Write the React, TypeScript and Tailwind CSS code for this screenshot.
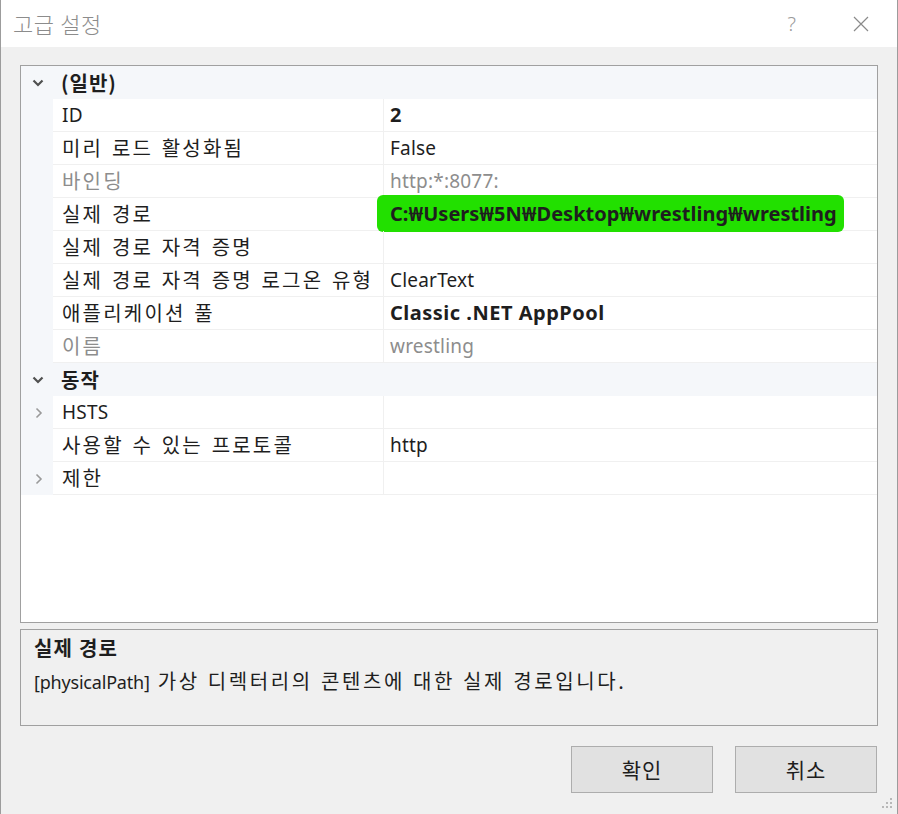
import React from 'react';

type Row =
  | { kind: 'cat'; label: string }
  | { kind: 'item'; name: string; value?: string; bold?: boolean; dim?: boolean; expand?: boolean; mark?: boolean };

const rows: Row[] = [
  { kind: 'cat', label: '(일반)' },
  { kind: 'item', name: 'ID', value: '2', bold: true },
  { kind: 'item', name: '미리 로드 활성화됨', value: 'False' },
  { kind: 'item', name: '바인딩', value: 'http:*:8077:', dim: true },
  { kind: 'item', name: '실제 경로', value: 'C:₩Users₩5N₩Desktop₩wrestling₩wrestling', bold: true, mark: true },
  { kind: 'item', name: '실제 경로 자격 증명', value: '' },
  { kind: 'item', name: '실제 경로 자격 증명 로그온 유형', value: 'ClearText' },
  { kind: 'item', name: '애플리케이션 풀', value: 'Classic .NET AppPool', bold: true },
  { kind: 'item', name: '이름', value: 'wrestling', dim: true },
  { kind: 'cat', label: '동작' },
  { kind: 'item', name: 'HSTS', value: '', expand: true },
  { kind: 'item', name: '사용할 수 있는 프로토콜', value: 'http' },
  { kind: 'item', name: '제한', value: '', expand: true },
];

const latin = { fontFamily: '"Noto Sans", "Noto Sans CJK KR", sans-serif' };
const hangul = { fontFamily: '"Noto Sans CJK KR", sans-serif' };
const hasHangul = (s: string) => /[\uac00-\ud7a3]/.test(s);

function Label({ text, className = '' }: { text: string; className?: string }) {
  if (hasHangul(text)) {
    return (
      <span
        className={`text-[20px] tracking-[2.2px] [word-spacing:2px] whitespace-nowrap ${className}`}
        style={hangul}
      >
        {text}
      </span>
    );
  }
  return (
    <span className={`text-[19px] tracking-[0.2px] whitespace-nowrap ${className}`} style={latin}>
      {text}
    </span>
  );
}

function ChevronDown() {
  return (
    <svg width="12" height="8" viewBox="0 0 12 8" className="text-[#505050]">
      <path d="M1.5 1.5 L6 6 L10.5 1.5" fill="none" stroke="currentColor" strokeWidth="2.2" />
    </svg>
  );
}

function ChevronRight() {
  return (
    <svg width="8" height="12" viewBox="0 0 8 12" className="text-[#9a9a9a]">
      <path d="M1.5 1.5 L6 6 L1.5 10.5" fill="none" stroke="currentColor" strokeWidth="1.6" />
    </svg>
  );
}

export default function App() {
  return (
    <div
      className="w-[898px] h-[814px] bg-[#f0f0f0] border-l border-r border-[#9c9c9c] flex flex-col relative overflow-hidden"
      style={latin}
    >
      {/* title bar */}
      <div className="h-[47px] bg-white flex items-center shrink-0">
        <span className="ml-[12px] text-[22px] tracking-[0.6px] text-[#8c8c8c] font-light" style={hangul}>
          고급 설정
        </span>
        <span className="ml-auto mr-[57px] text-[20px] text-[#9a9a9a] font-light">?</span>
        <svg width="16" height="16" viewBox="0 0 16 16" className="mr-[28px] text-[#8a8a8a]">
          <path d="M1 1 L15 15 M15 1 L1 15" stroke="currentColor" strokeWidth="1.2" />
        </svg>
      </div>

      {/* property grid */}
      <div className="mt-[18px] mx-[19px] h-[558px] border border-[#a0a0a0] bg-white shrink-0">
        {rows.map((r, i) =>
          r.kind === 'cat' ? (
            <div key={i} className="h-[33px] bg-[#f5f7fa] flex items-center">
              <div className="w-[32px] flex justify-center pl-[2px]">
                <ChevronDown />
              </div>
              <span
                className="ml-[8px] text-[20px] font-bold tracking-[1px] text-[#1e1e1e] whitespace-nowrap"
                style={hangul}
              >
                {r.label}
              </span>
            </div>
          ) : (
            <div key={i} className="h-[33px] flex">
              <div className="w-[32px] bg-[#f5f7fa] flex items-center justify-center pl-[4px]">
                {r.expand && <ChevronRight />}
              </div>
              <div className="w-[330px] border-b border-[#f0f0f0] flex items-center pl-[9px]">
                <Label text={r.name} className={r.dim ? 'text-[#8d8d8d]' : 'text-[#1e1e1e]'} />
              </div>
              <div className="flex-1 border-l border-b border-[#f0f0f0] flex items-center pl-[6px] relative">
                {r.mark && (
                  <div className="absolute left-[-7px] top-[-3px] w-[467px] h-[37px] bg-[#22e000] rounded-[6px]" />
                )}
                {r.value ? (
                  r.bold ? (
                    <span
                      className={`relative text-[20px] font-bold whitespace-nowrap text-[#1e1e1e] ${
                        r.mark ? '' : 'tracking-[0.5px]'
                      }`}
                      style={latin}
                    >
                      {r.value}
                    </span>
                  ) : (
                    <Label text={r.value} className={r.dim ? 'text-[#8d8d8d]' : 'text-[#1e1e1e]'} />
                  )
                ) : null}
              </div>
            </div>
          )
        )}
      </div>

      {/* description */}
      <div className="mt-[6px] mx-[19px] h-[97px] border border-[#a0a0a0] bg-[#f0f0f0] px-[13px] pt-[3px] shrink-0">
        <div className="text-[20px] font-bold tracking-[1.2px] text-[#1e1e1e] leading-[30px]" style={hangul}>
          실제 경로
        </div>
        <div className="leading-[30px] mt-[3px] text-[#1e1e1e] whitespace-nowrap">
          <span className="text-[18px] tracking-[-0.2px]" style={latin}>
            [physicalPath]
          </span>
          <span className="text-[20px] tracking-[2.6px] [word-spacing:1px]" style={hangul}>
            {' '}가상 디렉터리의 콘텐츠에 대한 실제 경로입니다.
          </span>
        </div>
      </div>

      {/* buttons */}
      <div className="flex justify-end gap-[22px] mt-[20px] mr-[20px]">
        {['확인', '취소'].map((t) => (
          <button
            key={t}
            className="w-[142px] h-[47px] bg-[#e1e1e1] border border-[#adadad] text-[21px] tracking-[1px] text-[#1e1e1e]"
            style={hangul}
          >
            {t}
          </button>
        ))}
      </div>

      {/* resize grip */}
      <svg width="14" height="14" viewBox="0 0 14 14" className="absolute right-[4px] bottom-[4px]">
        {[
          [11, 2],
          [7, 6],
          [11, 6],
          [3, 10],
          [7, 10],
          [11, 10],
        ].map(([x, y], k) => (
          <rect key={k} x={x} y={y} width="2" height="2" fill="#b8b8b8" />
        ))}
      </svg>
    </div>
  );
}
